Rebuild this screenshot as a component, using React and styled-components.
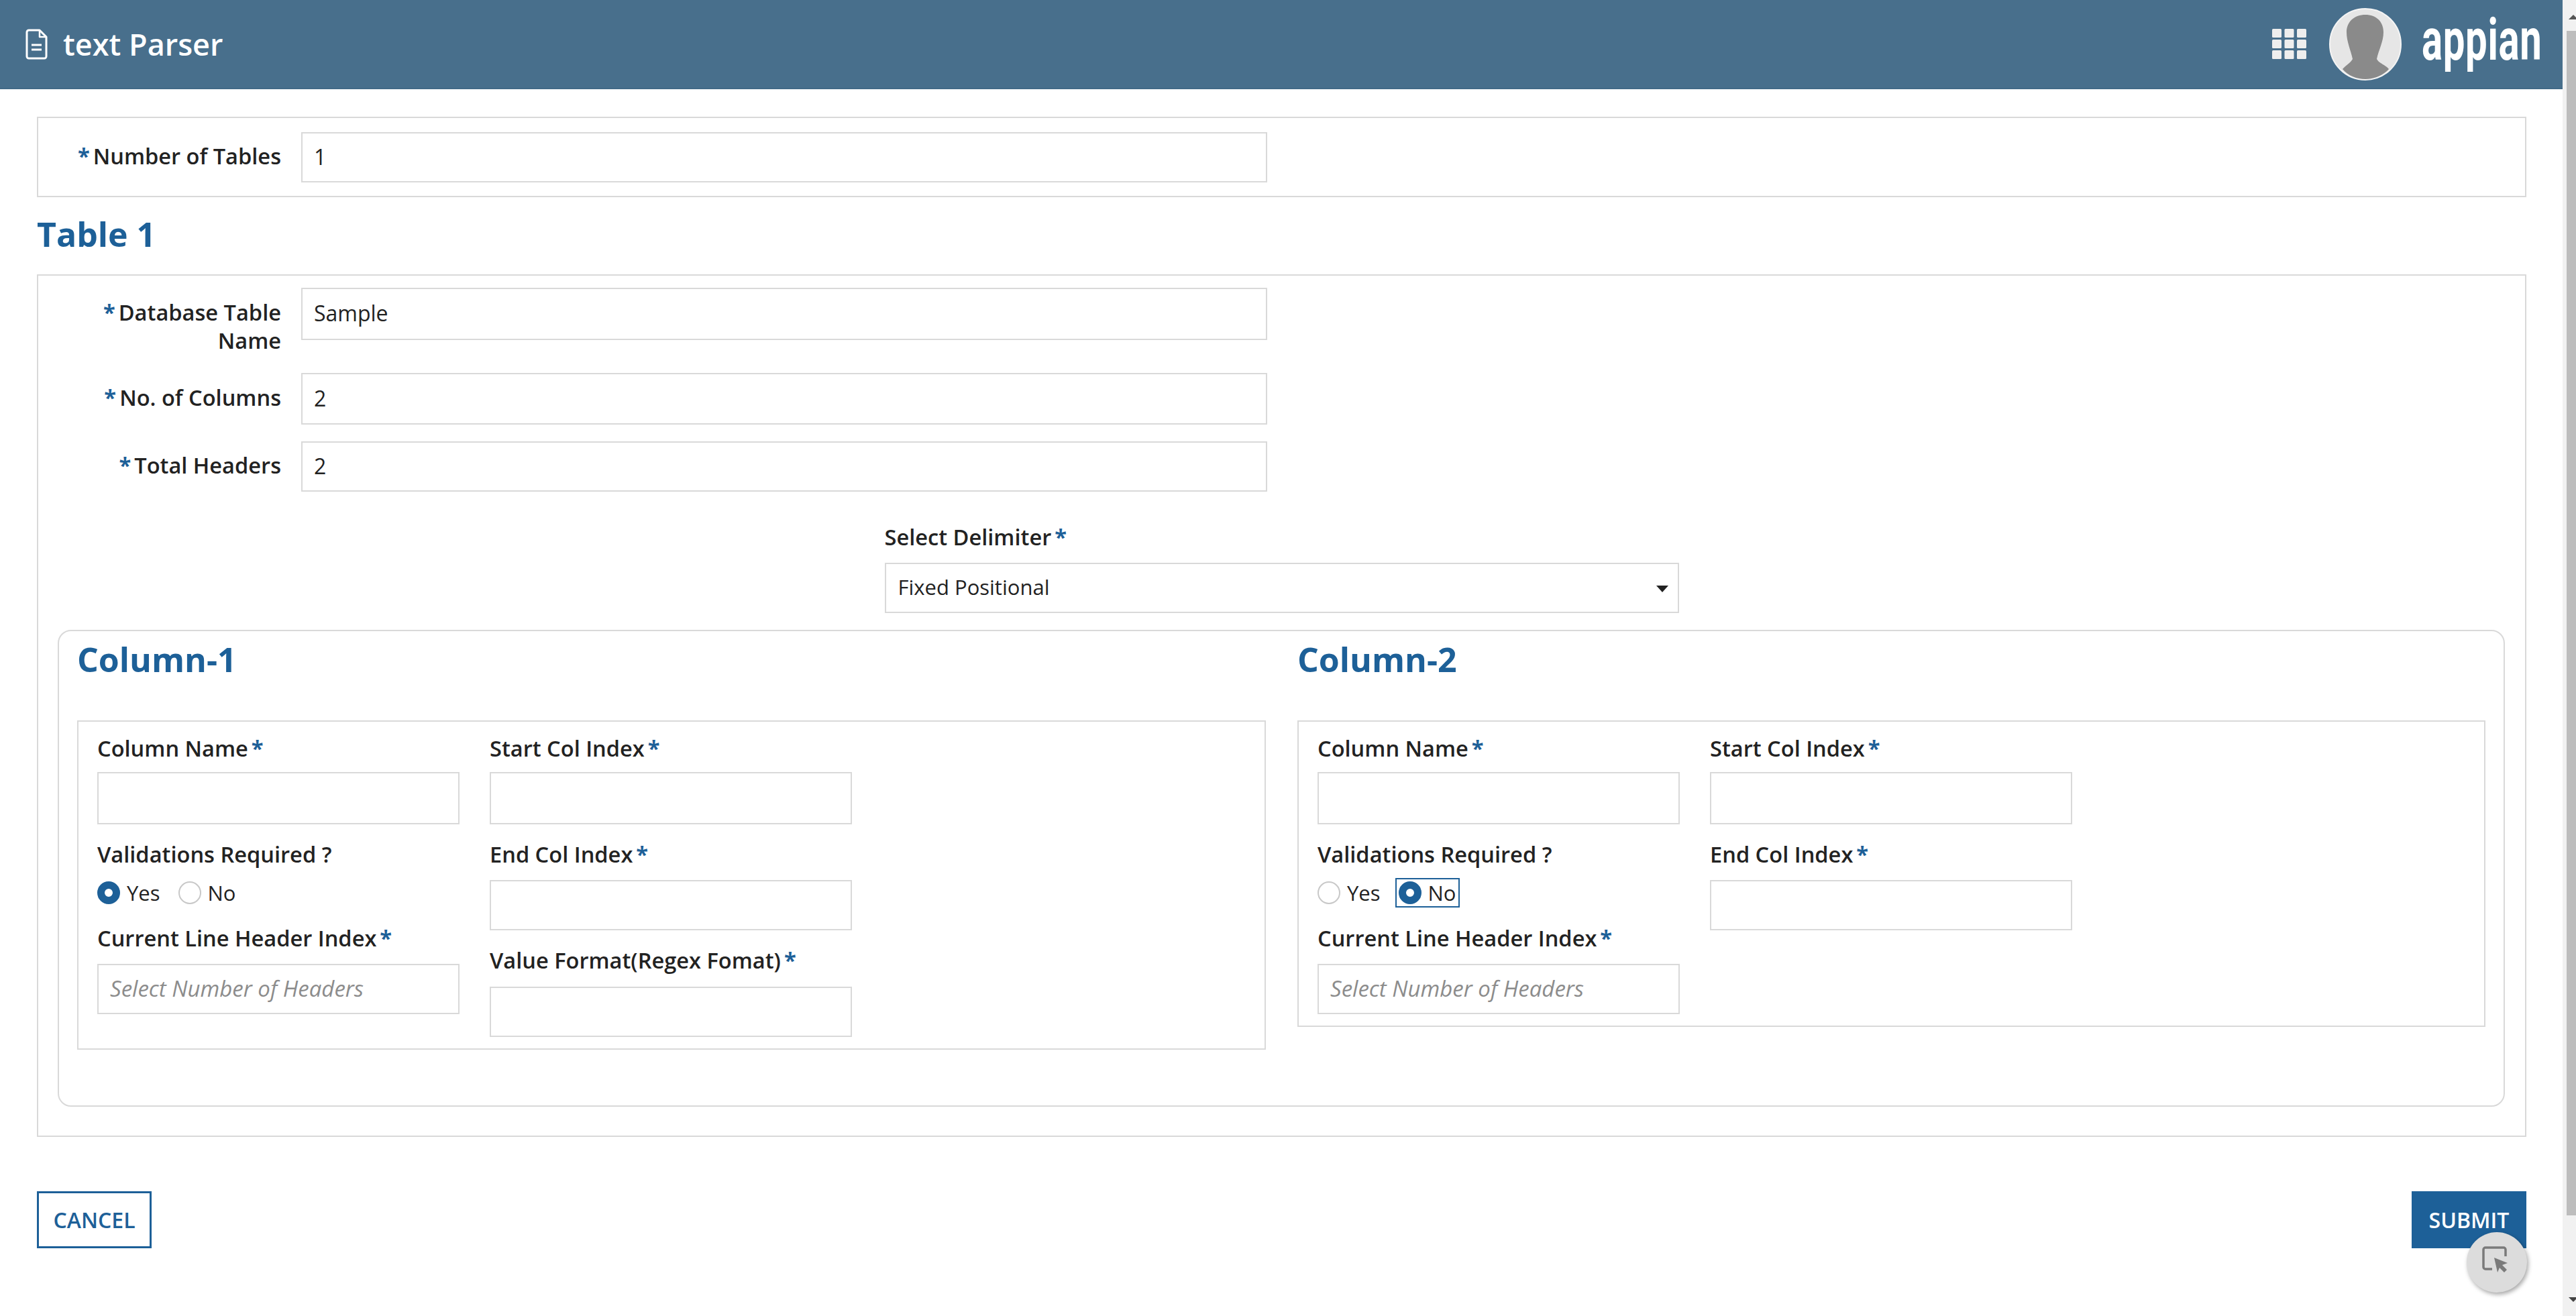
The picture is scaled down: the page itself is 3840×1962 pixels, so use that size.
import React from 'react';
import styled, { createGlobalStyle } from 'styled-components';

const GlobalStyle = createGlobalStyle`
  html, body {
    margin: 0;
    padding: 0;
    height: 100%;
    background: #fff;
    overflow: hidden;
  }
  * { box-sizing: border-box; }
`;

const BLUE = '#1d6098';
const LINE = '#d9d9d9';

const Shell = styled.div`
  display: flex;
  width: 3840px;
  height: 1962px;
  position: relative;
  font-family: "Open Sans", "Liberation Sans", sans-serif;
  color: #222;
`;

const Page = styled.div`
  flex: 1;
  min-width: 0;
  display: flex;
  flex-direction: column;
`;

const Header = styled.header`
  height: 133px;
  background: #486f8c;
  border-bottom: 2px solid #426a87;
  display: flex;
  align-items: center;
  padding: 0 30px 0 38px;
  color: #fff;
`;

const Title = styled.h1`
  margin: 0 0 0 23px;
  font-size: 45px;
  font-weight: 600;
  line-height: 1;
  flex: 1;
`;

const Avatar = styled.svg`
  width: 108px;
  height: 108px;
  margin: 0 30px 0 34px;
  display: block;
`;

const Logo = styled.div`
  width: 180px;
  font-family: "Roboto", sans-serif;
  font-weight: 700;
  font-size: 88px;
  line-height: 1;
  letter-spacing: 1px;
  transform: scaleX(0.66);
  transform-origin: left center;
  white-space: nowrap;
  margin-top: -14px;
`;

const Main = styled.main`
  padding: 41px 54px 0 55px;
  display: flex;
  flex-direction: column;
`;

const Box = styled.section`
  border: 2px solid ${LINE};
  display: flex;
  flex-direction: column;
  padding: ${p => p.$pad};
  gap: 25px;
`;

const Row = styled.div`
  display: grid;
  grid-template-columns: 362px 1440px;
  column-gap: 30px;
  align-items: ${p => (p.$top ? 'start' : 'center')};
`;

const SideLabel = styled.label`
  font-size: 32.6px;
  font-weight: 600;
  line-height: 42px;
  text-align: right;
  padding-left: 35px;
  padding-top: ${p => (p.$top ? '16px' : '0')};
  padding-bottom: ${p => (p.$top ? '2px' : '3px')};
`;

const Star = styled.span`
  color: ${BLUE};
  font-weight: 700;
  margin: ${p => (p.$before ? '0 5px 0 0' : '0 0 0 5px')};
`;

const TextInput = styled.input`
  display: block;
  width: 100%;
  height: ${p => p.$h || 75}px;
  border: 2px solid ${LINE};
  background: #fff;
  padding: 0 17px 3px;
  font-family: inherit;
  font-size: 32px;
  color: #222;
  outline: none;
  border-radius: 0;
  &::placeholder {
    color: #8c8c8c;
    font-style: italic;
    font-size: 33px;
    opacity: 1;
  }
`;

const Heading = styled.h2`
  margin: 0;
  height: 115px;
  color: ${BLUE};
  font-size: 50px;
  font-weight: 700;
  line-height: 111px;
`;

const DelimiterField = styled.div`
  width: 1184px;
  align-self: center;
  margin-top: 24px;
`;

const TopLabel = styled.label`
  display: block;
  font-size: 32.6px;
  font-weight: 600;
  line-height: 38px;
  padding-bottom: 2px;
  margin-top: ${p => p.$mt ?? 0}px;
  margin-bottom: ${p => p.$mb ?? 14}px;
`;

const SelectBox = styled.div`
  position: relative;
  height: 75px;
  border: 2px solid ${LINE};
  padding: 0 18px 3px;
  display: flex;
  align-items: center;
  font-size: 31px;
  &::after {
    content: '';
    position: absolute;
    right: 14px;
    top: 32px;
    border-left: 9px solid transparent;
    border-right: 9px solid transparent;
    border-top: 10px solid #222;
  }
`;

const Rounded = styled.div`
  border: 2px solid ${LINE};
  border-radius: 20px;
  margin: 0 30px 0 29px;
  padding: 0 27px 83px 27px;
  display: grid;
  grid-template-columns: 1772px 1771px;
  column-gap: 47px;
  align-items: start;
`;

const ColumnTitle = styled.h3`
  margin: 0;
  height: 133px;
  color: ${BLUE};
  font-size: 50px;
  font-weight: 700;
  line-height: 85px;
`;

const Panel = styled.div`
  border: 2px solid ${LINE};
  padding: 21px 0 17px 28px;
  display: grid;
  grid-template-columns: 540px 540px;
  column-gap: 45px;
  align-items: start;
`;

const Stack = styled.div`
  display: flex;
  flex-direction: column;
`;

const Radios = styled.div`
  display: flex;
  align-items: center;
  gap: 27px;
  height: 34px;
  margin-top: 19px;
  font-size: 31px;
`;

const RadioItem = styled.span`
  display: flex;
  align-items: center;
  gap: 10px;
  height: 34px;
  ${p => p.$focus && `
    outline: 2px solid ${BLUE};
    outline-offset: 3px;
  `}
`;

const Dot = styled.span`
  width: 34px;
  height: 34px;
  border-radius: 50%;
  flex: none;
  background: #fff;
  border: ${p => (p.$on ? `11px solid ${BLUE}` : '2px solid #c8c8c8')};
`;

const Actions = styled.div`
  display: flex;
  justify-content: space-between;
  margin-top: 81px;
`;

const Button = styled.button`
  width: 171px;
  height: 85px;
  border: 3px solid ${BLUE};
  background: ${p => (p.$primary ? BLUE : '#fff')};
  color: ${p => (p.$primary ? '#fff' : BLUE)};
  font-family: inherit;
  font-size: 32px;
  font-weight: 600;
  padding: 0;
  border-radius: 0;
`;

const Scrollbar = styled.div`
  width: 20px;
  background: #f1f1f1;
  padding: 46px 0 0 6px;
  position: relative;
`;

const Thumb = styled.div`
  width: 14px;
  height: 1766px;
  background: #bdbdbd;
`;

const Arrow = styled.span`
  position: absolute;
  right: -3px;
  top: ${p => p.$y}px;
  border-left: 7px solid transparent;
  border-right: 7px solid transparent;
  ${p => (p.$up ? 'border-bottom: 7px solid #555;' : 'border-top: 7px solid #444;')}
`;

const FloatButton = styled.div`
  position: absolute;
  left: 3677px;
  top: 1837px;
  width: 90px;
  height: 90px;
  border-radius: 50%;
  background: #dcdcdc;
  box-shadow: 2px 3px 6px rgba(0, 0, 0, 0.35);
`;

const DocIcon = () => (
  <svg width="33" height="46" viewBox="0 0 33 46" fill="none" stroke="#fff" strokeWidth="3" strokeLinejoin="round">
    <path d="M5 2H21L31 12V41a3 3 0 0 1-3 3H5a3 3 0 0 1-3-3V5a3 3 0 0 1 3-3Z" />
    <path d="M21 2V12H31" strokeWidth="2.5" />
    <path d="M9 24H24M9 31H24" />
  </svg>
);

const GridIcon = () => (
  <svg width="51" height="45" viewBox="0 0 51 45" fill="#eee">
    {[0, 18.5, 37].map(x => [0, 16, 32].map(y => (
      <rect key={`${x}-${y}`} x={x} y={y} width="14" height="13" rx="1.5" />
    )))}
  </svg>
);

const AvatarIcon = () => (
  <Avatar viewBox="0 0 108 108">
    <circle cx="54" cy="54" r="53" fill="#e6e6e6" stroke="#f4f4f4" strokeWidth="2" />
    <path
      fill="#8a8a8a"
      d="M54 10C70 10 81 20 81 36C81 50 74 62 71 76C74 82 84 85 89 91C80 101 66 106 54 106C42 106 28 101 20 91C25 85 32 82 35 76C32 62 26 50 26 36C26 20 38 10 54 10Z"
    />
  </Avatar>
);

const CursorIcon = () => (
  <svg width="90" height="90" viewBox="0 0 90 90" fill="none">
    <path
      d="M58 36V26a3 3 0 0 0-3-3H28a3 3 0 0 0-3 3V52a3 3 0 0 0 3 3H38"
      stroke="#7a7a7a"
      strokeWidth="3.5"
    />
    <path d="M41 38L61 46L53 49L60 56L56 60L49 53L46 60Z" fill="#7a7a7a" />
  </svg>
);

const Req = () => <Star>*</Star>;

const Radio = ({ label, on, focus }) => (
  <RadioItem $focus={focus}>
    <Dot $on={on} />
    {label}
  </RadioItem>
);

const ColumnPanel = ({ name, yes, withFormat }) => (
  <div>
    <ColumnTitle>{name}</ColumnTitle>
    <Panel>
      <Stack>
        <TopLabel>Column Name<Req /></TopLabel>
        <TextInput $h={78} readOnly />
        <TopLabel $mt={26} $mb={0}>Validations Required ?</TopLabel>
        <Radios>
          <Radio label="Yes" on={yes} />
          <Radio label="No" on={!yes} focus={!yes} />
        </Radios>
        <TopLabel $mt={32} $mb={17}>Current Line Header Index<Req /></TopLabel>
        <TextInput placeholder="Select Number of Headers" readOnly />
      </Stack>
      <Stack>
        <TopLabel>Start Col Index<Req /></TopLabel>
        <TextInput $h={78} readOnly />
        <TopLabel $mt={26} $mb={17}>End Col Index<Req /></TopLabel>
        <TextInput readOnly />
        {withFormat && (
          <>
            <TopLabel $mt={26} $mb={18}>Value Format(Regex Fomat)<Req /></TopLabel>
            <TextInput readOnly />
          </>
        )}
      </Stack>
    </Panel>
  </div>
);

export default function App() {
  return (
    <Shell>
      <GlobalStyle />
      <Page>
        <Header>
          <DocIcon />
          <Title>text Parser</Title>
          <GridIcon />
          <AvatarIcon />
          <Logo>appian</Logo>
        </Header>
        <Main>
          <Box $pad="21px 0 20px">
            <Row>
              <SideLabel><Star $before>*</Star>Number of Tables</SideLabel>
              <TextInput defaultValue="1" readOnly />
            </Row>
          </Box>
          <Heading>Table 1</Heading>
          <Box $pad="18px 0 43px">
            <Row $top>
              <SideLabel $top><Star $before>*</Star>Database Table Name</SideLabel>
              <TextInput $h={78} defaultValue="Sample" readOnly />
            </Row>
            <Row>
              <SideLabel><Star $before>*</Star>No. of Columns</SideLabel>
              <TextInput $h={77} defaultValue="2" readOnly />
            </Row>
            <Row>
              <SideLabel><Star $before>*</Star>Total Headers</SideLabel>
              <TextInput defaultValue="2" readOnly />
            </Row>
            <DelimiterField>
              <TopLabel $mb={17}>Select Delimiter<Req /></TopLabel>
              <SelectBox>Fixed Positional</SelectBox>
            </DelimiterField>
            <Rounded>
              <ColumnPanel name="Column-1" yes withFormat />
              <ColumnPanel name="Column-2" />
            </Rounded>
          </Box>
          <Actions>
            <Button>CANCEL</Button>
            <Button $primary>SUBMIT</Button>
          </Actions>
        </Main>
      </Page>
      <Scrollbar>
        <Arrow $up $y={22} />
        <Thumb />
        <Arrow $y={1934} />
      </Scrollbar>
      <FloatButton>
        <CursorIcon />
      </FloatButton>
    </Shell>
  );
}
